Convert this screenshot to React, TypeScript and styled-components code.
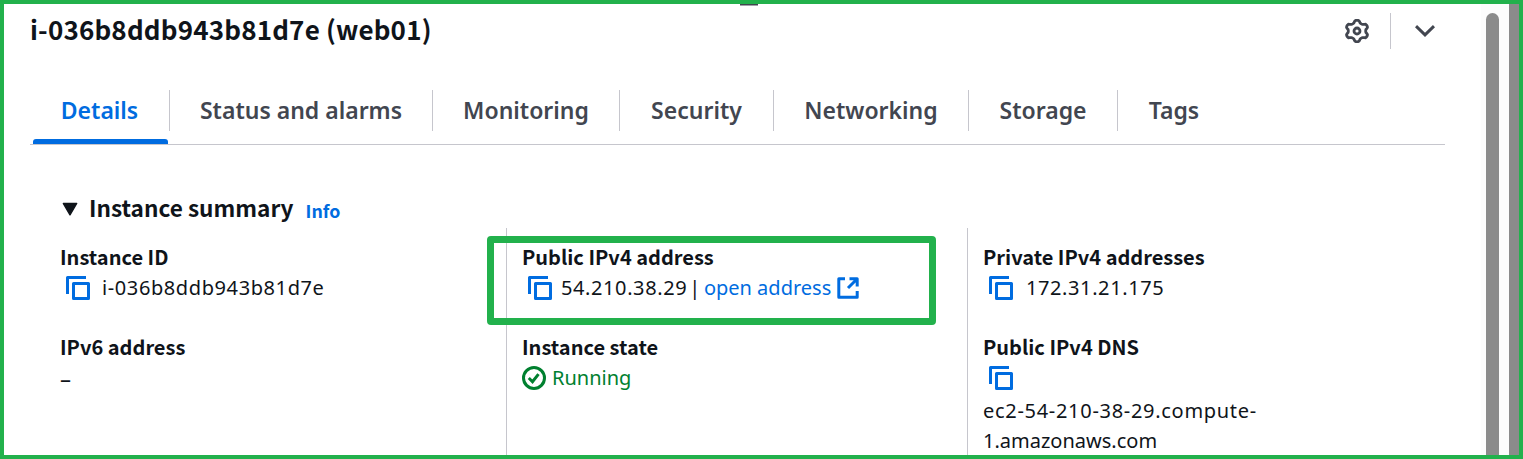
import React from 'react';
import styled, { createGlobalStyle } from 'styled-components';

const body = "'Noto Sans', sans-serif";
const label = "'Noto Sans CJK SC', 'Noto Sans', sans-serif";
const ink = '#0f141a';
const muted = '#424650';
const blue = '#006ce0';
const line = '#c6c6cd';
const green = '#22b14c';

const GlobalStyle = createGlobalStyle`
  * { box-sizing: border-box; }
  body { margin: 0; background: #fff; overflow: hidden; }
  svg { flex: none; }
`;

const Frame = styled.div`
  position: relative;
  display: flex;
  width: 1523px;
  height: 459px;
  border: 4px solid ${green};
  background: #fff;
  overflow: hidden;
  font: 400 20px/30px ${body};
  color: ${ink};
`;
const Panel = styled.main`
  flex: 1;
  min-width: 0;
  padding: 0 36px 0 26px;
`;
const ResizeHandle = styled.div`
  position: absolute;
  left: 736px;
  top: -1px;
  width: 18px;
  height: 3px;
  background: ${muted};
  border-bottom: 1px solid #a0a2a8;
`;
const ScrollTrack = styled.div`
  width: 28px;
  padding: 9px 10px 0 5px;
  background: #fcfcfc;
`;
const ScrollThumb = styled.div`
  height: 100%;
  border-radius: 7px 7px 0 0;
  background: #8b8b8b;
`;
const OuterBar = styled.div`
  width: 10px;
  background: #8b8b8b;
`;

const Header = styled.header`
  display: flex;
  align-items: center;
  height: 54px;
  padding-right: 10px;
`;
const Title = styled.h1`
  flex: 1;
  margin: 0;
  padding-bottom: 4px;
  font: 700 26px/36px ${label};
  letter-spacing: 0.18px;
  white-space: nowrap;
`;
const Actions = styled.div`
  display: flex;
  align-items: center;
  color: ${muted};
`;
const Divider = styled.span`
  width: 1px;
  height: 36px;
  margin: 0 24px 0 21px;
  background: ${line};
`;

const Tabs = styled.nav`
  display: flex;
  align-items: flex-start;
  height: 87px;
  padding-top: 32px;
  border-bottom: 1px solid ${line};
`;
const Tab = styled.div<{ $width: number; $active?: boolean }>`
  position: relative;
  display: flex;
  justify-content: center;
  width: ${p => p.$width}px;
  height: 41px;
  border-right: 1px solid ${line};
  font: 600 23px/40px ${body};
  color: ${p => (p.$active ? blue : muted)};
  white-space: nowrap;
  &:last-child { border-right: 0; }
  &::after {
    content: '';
    display: ${p => (p.$active ? 'block' : 'none')};
    position: absolute;
    left: 3px;
    right: 1px;
    bottom: -13px;
    height: 5px;
    border-radius: 3px 3px 0 0;
    background: ${blue};
  }
`;

const SectionHeader = styled.div`
  display: flex;
  align-items: center;
  height: 36px;
  margin-top: 46px;
  padding-left: 32px;
`;
const SectionTitle = styled.h2`
  margin: 0 12px 0 11px;
  padding-bottom: 3px;
  font: 700 22.6px/33px ${label};
`;
const Info = styled.a`
  padding-top: 1px;
  font: 700 17.8px/30px ${label};
  color: ${blue};
`;

const Columns = styled.div`
  display: grid;
  grid-template-columns: 476px 461px 1fr;
  height: 240px;
  margin-top: 1px;
`;
const Column = styled.section<{ $first?: boolean }>`
  padding: ${p => (p.$first ? '14px 0 0 30px' : '14px 0 0 15px')};
  border-left: ${p => (p.$first ? '0' : `1px solid ${line}`)};
`;
const Field = styled.div`
  height: 90px;
`;
const Label = styled.div`
  height: 31px;
  font: 700 20px/30px ${label};
  white-space: nowrap;
`;
const Value = styled.div<{ $spacing?: number }>`
  display: flex;
  align-items: center;
  height: 30px;
  letter-spacing: ${p => p.$spacing ?? 0}px;
  white-space: nowrap;
`;
const CopySlot = styled.span<{ $width: number }>`
  display: flex;
  width: ${p => p.$width}px;
  padding: 0 0 0 6px;
`;
const Dash = styled.span`
  font-size: 22px;
`;
const Bar = styled.span`
  margin: 0 3px 0 2px;
`;
const Link = styled.a`
  display: flex;
  align-items: center;
  gap: 6px;
  color: ${blue};
  letter-spacing: 0;
`;
const Status = styled(Value)`
  gap: 6px;
  color: #00802f;
`;
const Dns = styled.div<{ $spacing: number }>`
  height: 30px;
  letter-spacing: ${p => p.$spacing}px;
`;
const DnsBlock = styled.div`
  padding-top: 3px;
`;
const Highlight = styled.div`
  position: absolute;
  left: 483px;
  top: 232px;
  width: 449px;
  height: 89px;
  border: 7px solid ${green};
  border-radius: 4px;
`;

const CopyIcon = () => (
  <svg width="24" height="24" viewBox="0 0 24 24" fill="none" stroke={blue} strokeWidth="3" strokeLinejoin="round">
    <path d="M1.5 18V1.5H20" />
    <path d="M7.5 7.5h15v15h-15z" />
  </svg>
);
const ExternalIcon = () => (
  <svg width="22" height="22" viewBox="0 0 22 22" fill="none" stroke={blue} strokeWidth="3" strokeLinejoin="round">
    <path d="M8 1.8H1.8v18.4h18.4V14M12.5 1.8h7.7v7.7M20 2l-9 9" />
  </svg>
);
const CheckIcon = () => (
  <svg width="24" height="24" viewBox="0 0 24 24" fill="none" stroke="#00802f" strokeWidth="3">
    <circle cx="12" cy="12" r="10.5" />
    <path d="M6.8 12l3.7 3.7 6-7.6" />
  </svg>
);

// Six-lobed outline, one lobe pointing straight up.
const gearPath = `M${Array.from({ length: 72 }, (_, i) => {
  const a = (i * Math.PI) / 36;
  const r = 9.5 + 1.35 * Math.tanh(-1.8 * Math.cos(6 * a));
  return `${(12 + 1.06 * r * Math.cos(a)).toFixed(2)} ${(12 + r * Math.sin(a)).toFixed(2)}`;
}).join('L')}Z`;
const GearIcon = () => (
  <svg width="24" height="24" viewBox="0 0 24 24" fill="none" stroke="currentColor" strokeWidth="2.8" strokeLinejoin="round">
    <path d={gearPath} />
    <circle cx="12" cy="12" r="3" />
  </svg>
);
const ChevronIcon = () => (
  <svg width="20" height="12" viewBox="0 0 20 12" fill="none" stroke="currentColor" strokeWidth="3">
    <path d="M1 1.2l9 8.7 9-8.7" />
  </svg>
);
const CaretIcon = () => (
  <svg width="16" height="14" viewBox="0 0 16 14" fill={ink} stroke={ink} strokeWidth="1.4" strokeLinejoin="round">
    <path d="M1.3 1.5h13.4L8 12.8z" />
  </svg>
);

const tabs: [string, number][] = [
  ['Details', 140], ['Status and alarms', 263], ['Monitoring', 187], ['Security', 154],
  ['Networking', 195], ['Storage', 149], ['Tags', 112],
];

export default function App() {
  return (
    <Frame>
      <GlobalStyle />
      <Panel>
        <Header>
          <Title>i-036b8ddb943b81d7e (web01)</Title>
          <Actions>
            <GearIcon />
            <Divider />
            <ChevronIcon />
          </Actions>
        </Header>
        <Tabs>
          {tabs.map(([name, width], i) => (
            <Tab key={name} $width={width} $active={i === 0}>{name}</Tab>
          ))}
        </Tabs>
        <SectionHeader>
          <CaretIcon />
          <SectionTitle>Instance summary</SectionTitle>
          <Info>Info</Info>
        </SectionHeader>
        <Columns>
          <Column $first>
            <Field>
              <Label>Instance ID</Label>
              <Value $spacing={0.6}><CopySlot $width={42}><CopyIcon /></CopySlot>i-036b8ddb943b81d7e</Value>
            </Field>
            <Field>
              <Label>IPv6 address</Label>
              <Value><Dash>–</Dash></Value>
            </Field>
          </Column>
          <Column>
            <Field>
              <Label>Public IPv4 address</Label>
              <Value $spacing={0.6}>
                <CopySlot $width={39}><CopyIcon /></CopySlot>54.210.38.29<Bar>|</Bar>
                <Link>open address <ExternalIcon /></Link>
              </Value>
            </Field>
            <Field>
              <Label>Instance state</Label>
              <Status><CheckIcon />Running</Status>
            </Field>
          </Column>
          <Column>
            <Field>
              <Label>Private IPv4 addresses</Label>
              <Value $spacing={0.6}><CopySlot $width={43}><CopyIcon /></CopySlot>172.31.21.175</Value>
            </Field>
            <Field>
              <Label>Public IPv4 DNS</Label>
              <Value><CopySlot $width={43}><CopyIcon /></CopySlot></Value>
              <DnsBlock>
                <Dns $spacing={0.7}>ec2-54-210-38-29.compute-</Dns>
                <Dns $spacing={0}>1.amazonaws.com</Dns>
              </DnsBlock>
            </Field>
          </Column>
        </Columns>
      </Panel>
      <ScrollTrack><ScrollThumb /></ScrollTrack>
      <OuterBar />
      <ResizeHandle />
      <Highlight />
    </Frame>
  );
}
